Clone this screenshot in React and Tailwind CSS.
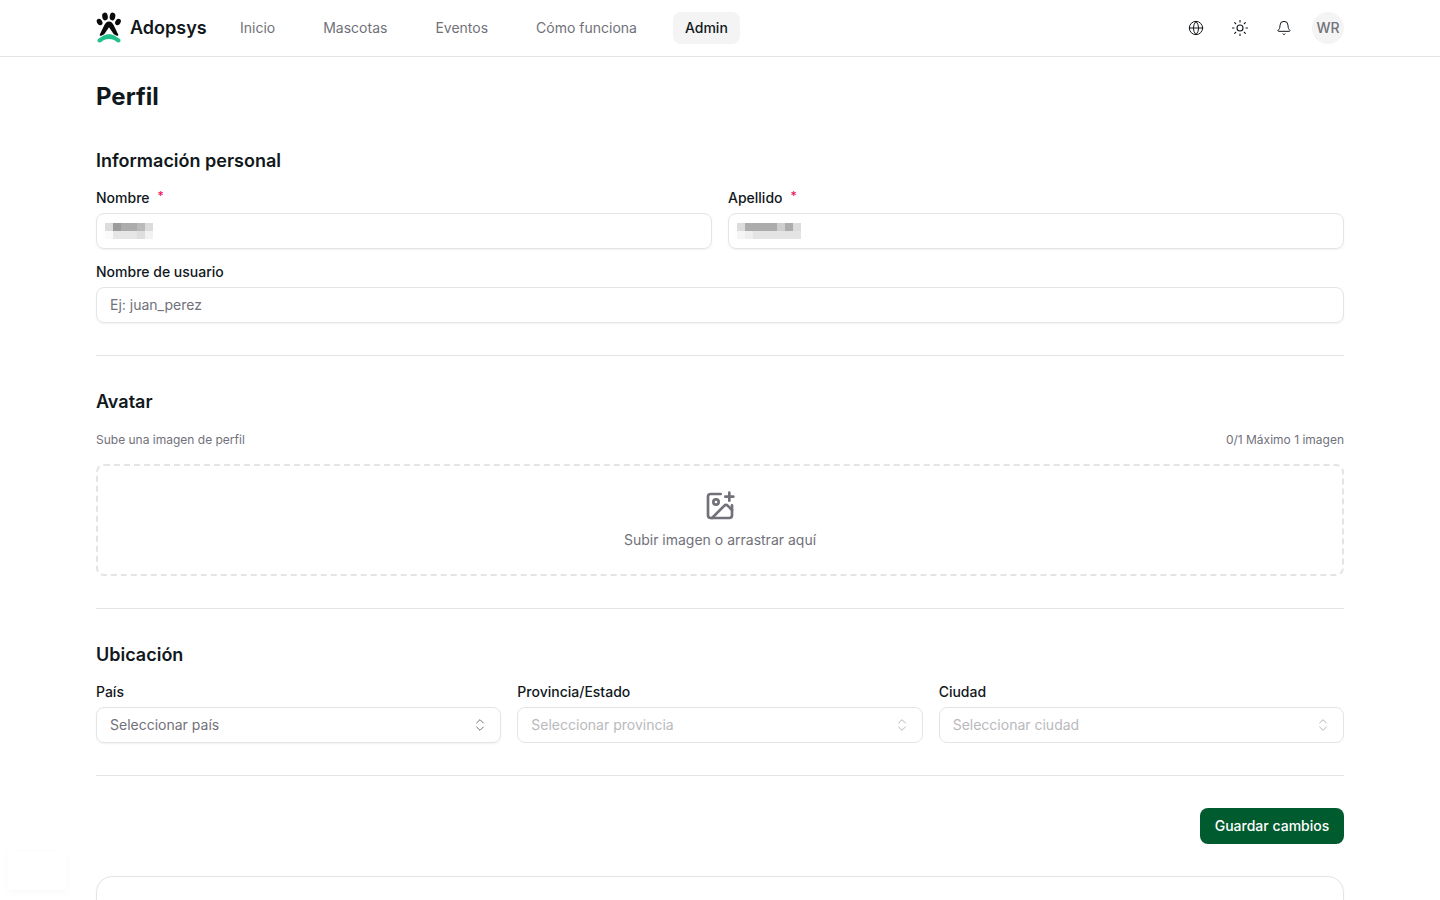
import React from 'react';
import { Globe, Sun, Bell, ChevronsUpDown, ImagePlus } from 'lucide-react';

const NAV = ['Inicio', 'Mascotas', 'Eventos', 'Cómo funciona'];

const Logo = () => (
  <svg width="26" height="34" viewBox="0 0 26 34" className="shrink-0">
    <ellipse cx="3.6" cy="11" rx="2.6" ry="3.4" transform="rotate(-30 3.6 11)" fill="#0a0a0a" />
    <ellipse cx="9" cy="5.5" rx="2.8" ry="3.9" transform="rotate(-10 9 5.5)" fill="#0a0a0a" />
    <ellipse cx="16.5" cy="5.5" rx="2.8" ry="3.9" transform="rotate(10 16.5 5.5)" fill="#0a0a0a" />
    <ellipse cx="22" cy="11" rx="2.6" ry="3.4" transform="rotate(30 22 11)" fill="#0a0a0a" />
    <path d="M13 10.5c2.2 0 3.6 1.6 4.6 3.6l4.6 9.4c.4 1-.5 1.6-1.4 1.2l-3-1.4-4.8-7-4.8 7-3 1.4c-.9.4-1.8-.2-1.4-1.2l4.6-9.4c1-2 2.4-3.6 4.6-3.6z" fill="#0a0a0a" />
    <path d="M1.5 29.5c0-1 .5-1.6 1.4-2 3-1.4 5-4.2 10.1-4.2s7.100 2.800 10.100 4.200c.9.4 1.400 1 1.400 2 0 1.300-.6 2-1.700 2-2.300 0-3-1.800-4.800-2.600-1.600-.7-3.300-.9-5-.9s-3.400.2-5 .9c-1.800.8-2.500 2.600-4.800 2.600-1.100 0-1.700-.7-1.700-2z" fill="#22c08a" />
  </svg>
);

const Redacted = ({ rows, width }) => (
  <svg width={width} height="16" shapeRendering="crispEdges" className="block">
    {rows.map((row, y) =>
      row.map((fill, x) => <rect key={`${y}-${x}`} x={x * 8} y={y * 8} width="8" height="8" fill={fill} />)
    )}
  </svg>
);

const Label = ({ children, required }) => (
  <label className="flex items-start h-5 text-sm font-medium leading-5 text-[#11181c]">
    {children}
    {required && <span className="ml-2 text-xs leading-4 text-[#f31260]">*</span>}
  </label>
);

const Divider = () => <div className="h-px bg-[#e4e4e7]" />;

const SelectBox = ({ label, placeholder, disabled }) => (
  <div className="flex-1 min-w-0">
    <Label>{label}</Label>
    <div className={`mt-[5px] h-9 flex items-center justify-between pl-[13px] pr-3 rounded-lg border border-[#e4e4e7] shadow-[0_1px_2px_rgba(0,0,0,0.06)] text-sm ${disabled ? 'text-[#b9b9bd] shadow-none' : 'text-[#71717a]'}`}>
      <span>{placeholder}</span>
      <ChevronsUpDown className={`w-4 h-4 ${disabled ? 'text-[#b4b4b8]' : 'text-[#71717a]'}`} strokeWidth={1.5} />
    </div>
  </div>
);

export default function App() {
  return (
    <div className="relative h-[900px] overflow-hidden bg-white text-[#11181c] font-['Inter',sans-serif]">
      <header className="h-[57px] border-b border-[#e4e4e7] px-24 flex items-center justify-between">
        <div className="flex items-center">
          <div className="flex items-center w-[132px] gap-2">
            <Logo />
            <span className="text-lg font-semibold">Adopsys</span>
          </div>
          <nav className="flex items-center gap-6">
            {NAV.map((item) => (
              <a key={item} className="h-8 px-3 flex items-center text-sm text-[#71717a]">{item}</a>
            ))}
            <a className="h-8 px-3 flex items-center rounded-lg bg-[#f4f4f5] text-sm font-medium text-[#11181c]">Admin</a>
          </nav>
        </div>
        <div className="flex items-center gap-3">
          <button className="w-8 h-8 flex items-center justify-center"><Globe className="w-4 h-4" strokeWidth={1.5} /></button>
          <button className="w-8 h-8 flex items-center justify-center"><Sun className="w-[18px] h-[18px]" strokeWidth={1.5} /></button>
          <button className="w-8 h-8 flex items-center justify-center"><Bell className="w-4 h-4" strokeWidth={1.5} /></button>
          <div className="w-8 h-8 rounded-full bg-[#f4f4f5] flex items-center justify-center text-sm font-medium text-[#71717a]">WR</div>
        </div>
      </header>

      <main className="px-24">
        <h1 className="mt-[24px] h-8 text-2xl leading-8 font-bold">Perfil</h1>

        <section className="mt-[34px]">
          <h2 className="h-7 text-lg leading-7 font-semibold">Información personal</h2>
          <div className="mt-[13px] grid grid-cols-2 gap-4">
            <div>
              <Label required>Nombre</Label>
              <div className="mt-[5px] h-9 flex items-center pl-2 rounded-lg border border-[#e4e4e7] shadow-[0_1px_2px_rgba(0,0,0,0.06)]">
                <Redacted width={48} rows={[
                  ['#dcdcdc', '#9c9c9c', '#acacac', '#acacac', '#bababa', '#dcdcdc'],
                  ['#fafafa', '#e6e6e6', '#e6e6e6', '#e6e6e6', '#dedede', '#f2f2f2'],
                ]} />
              </div>
            </div>
            <div>
              <Label required>Apellido</Label>
              <div className="mt-[5px] h-9 flex items-center pl-2 rounded-lg border border-[#e4e4e7] shadow-[0_1px_2px_rgba(0,0,0,0.06)]">
                <Redacted width={64} rows={[
                  ['#dcdcdc', '#acacac', '#acacac', '#acacac', '#acacac', '#cecece', '#acacac', '#dcdcdc'],
                  ['#f5f5f5', '#eeeeee', '#e4e4e4', '#e4e4e4', '#e4e4e4', '#e4e4e4', '#e4e4e4', '#e4e4e4'],
                ]} />
              </div>
            </div>
          </div>
          <div className="mt-[13px]">
            <Label>Nombre de usuario</Label>
            <div className="mt-[5px] h-9 flex items-center pl-[13px] rounded-lg border border-[#e4e4e7] shadow-[0_1px_2px_rgba(0,0,0,0.06)] text-sm text-[#71717a]">
              Ej: juan_perez
            </div>
          </div>
        </section>

        <div className="mt-8"><Divider /></div>

        <section className="mt-[32px]">
          <h2 className="h-7 text-lg leading-7 font-semibold">Avatar</h2>
          <div className="mt-[16px] h-4 flex items-center justify-between text-xs text-[#71717a]">
            <span>Sube una imagen de perfil</span>
            <span>0/1 Máximo 1 imagen</span>
          </div>
          <div className="mt-4 h-[112px] rounded-lg border-2 border-dashed border-[#e4e4e7] flex flex-col items-center justify-center gap-2">
            <ImagePlus className="w-8 h-8 text-[#71717a]" strokeWidth={2} />
            <span className="text-sm text-[#71717a]">Subir imagen o arrastrar aquí</span>
          </div>
        </section>

        <div className="mt-8"><Divider /></div>

        <section className="mt-[32px]">
          <h2 className="h-7 text-lg leading-7 font-semibold">Ubicación</h2>
          <div className="mt-[13px] flex gap-4">
            <SelectBox label="País" placeholder="Seleccionar país" />
            <SelectBox label="Provincia/Estado" placeholder="Seleccionar provincia" disabled />
            <SelectBox label="Ciudad" placeholder="Seleccionar ciudad" disabled />
          </div>
        </section>

        <div className="mt-8"><Divider /></div>

        <div className="mt-8 flex justify-end">
          <button className="w-36 h-9 rounded-lg bg-[#005c2e] text-sm font-medium text-white">Guardar cambios</button>
        </div>

        <div className="mt-8 h-64 rounded-2xl border border-[#e4e4e7] shadow-[0_1px_2px_rgba(0,0,0,0.06)]" />
      </main>

      {/* faint floating widget, bottom left */}
      <div className="absolute left-2 top-[852px] w-[58px] h-[38px] bg-white shadow-[0_2px_8px_rgba(0,0,0,0.03)]" />
    </div>
  );
}
